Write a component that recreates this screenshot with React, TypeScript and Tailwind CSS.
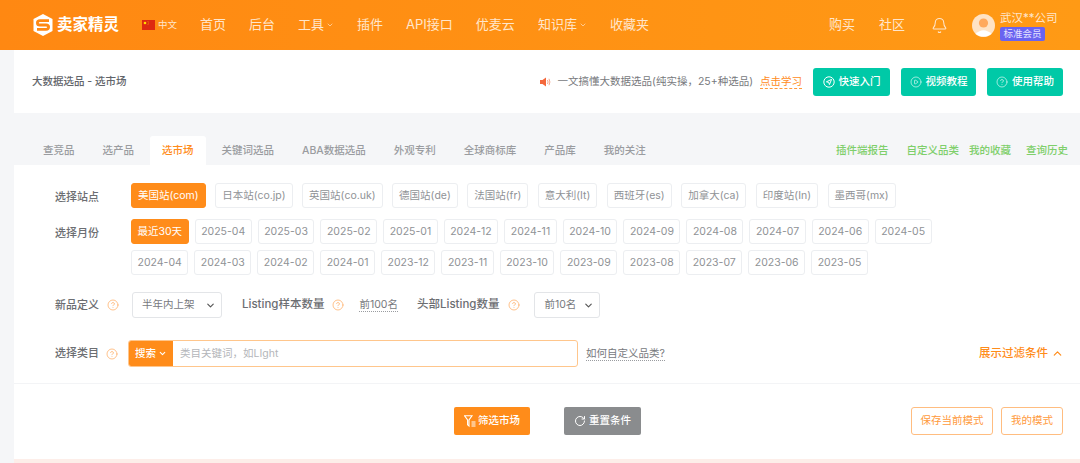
import React from "react";
import { Bell, ChevronDown, ChevronUp, CircleHelp, CirclePlay, RotateCw } from "lucide-react";

const navItems = [
    { text: "首页", arrow: false },
    { text: "后台", arrow: false },
    { text: "工具", arrow: true },
    { text: "插件", arrow: false },
    { text: "API接口", arrow: false },
    { text: "优麦云", arrow: false },
    { text: "知识库", arrow: true },
    { text: "收藏夹", arrow: false },
];

const tabs = ["查竞品", "选产品", "选市场", "关键词选品", "ABA数据选品", "外观专利", "全球商标库", "产品库", "我的关注"];

const sites = ["美国站(com)", "日本站(co.jp)", "英国站(co.uk)", "德国站(de)", "法国站(fr)", "意大利(It)", "西班牙(es)", "加拿大(ca)", "印度站(In)", "墨西哥(mx)"];

const monthsA = ["最近30天", "2025-04", "2025-03", "2025-02", "2025-01", "2024-12", "2024-11", "2024-10", "2024-09", "2024-08", "2024-07", "2024-06", "2024-05"];
const monthsB = ["2024-04", "2024-03", "2024-02", "2024-01", "2023-12", "2023-11", "2023-10", "2023-09", "2023-08", "2023-07", "2023-06", "2023-05"];

function Chip({ text, active, wide }: { text: string; active?: boolean; wide?: boolean }) {
    return (
        <div
            className={`flex h-[25px] items-center rounded-[3px] border text-[10.5px] whitespace-nowrap ${wide ? "px-[6px]" : "px-[5.5px]"} ${
                active ? "border-[#ff8c1a] bg-[#ff8c1a] text-white" : "border-[#eceef1] bg-white text-[#8f9296]"
            }`}
        >
            {text}
        </div>
    );
}

function Label({ children, wide }: { children: React.ReactNode; wide?: boolean }) {
    return <div className={`font-medium whitespace-nowrap text-[#6c6e72] ${wide ? "text-[11.5px]" : "text-[11px]"}`}>{children}</div>;
}

function Help() {
    return <CircleHelp size={12} strokeWidth={1.5} className="shrink-0 text-[#ffad66]" />;
}

function FakeSelect({ text, width }: { text: string; width: string }) {
    return (
        <div className={`flex h-[26px] items-center justify-between rounded-[3px] border border-[#e3e5e8] pr-[5px] pl-[9px] text-[10.5px] text-[#77797d] ${width}`}>
            <span>{text}</span>
            <ChevronDown size={11} strokeWidth={2.5} className="text-[#555]" />
        </div>
    );
}

function GreenButton({ icon, text, width }: { icon: React.ReactNode; text: string; width: string }) {
    return (
        <div className={`flex h-[28px] items-center justify-center gap-[4px] rounded-[3px] bg-[#00c9a7] text-[10.5px] font-medium text-white ${width}`}>
            {icon}
            {text}
        </div>
    );
}

function Logo() {
    return (
        <svg width="20" height="22" viewBox="0 0 20 22" className="shrink-0">
            <polygon points="10,0 19.5,5 19.5,17 10,22 0.5,17 0.5,5" fill="#fff" />
            <path d="M16 6.6 H7 Q4.4 6.6 4.4 8.9 Q4.4 11 7 11 H13 Q15.6 11 15.6 13.1 Q15.6 15.4 13 15.4 H4" fill="none" stroke="#ff8812" strokeWidth="2.8" />
        </svg>
    );
}

function Flag() {
    return (
        <svg width="13" height="10" viewBox="0 0 13 10" className="shrink-0">
            <rect width="13" height="10" fill="#de2910" />
            <circle cx="3" cy="3" r="1.3" fill="#ffde00" />
            <circle cx="6" cy="1.6" r="0.4" fill="#ffde00" />
            <circle cx="6.6" cy="3" r="0.4" fill="#ffde00" />
            <circle cx="6" cy="4.6" r="0.4" fill="#ffde00" />
        </svg>
    );
}

function Avatar() {
    return (
        <svg width="23" height="23" viewBox="0 0 23 23" className="shrink-0">
            <circle cx="11.5" cy="11.5" r="11.5" fill="#ffe3c4" />
            <circle cx="11.5" cy="9" r="4.6" fill="#ffa95c" />
            <path d="M3.5 20 Q11.5 12.5 19.5 20 Q11.5 25 3.5 20 Z" fill="#fff" />
        </svg>
    );
}

function Speaker() {
    return (
        <svg width="11" height="10" viewBox="0 0 11 10" className="shrink-0">
            <path d="M0 3 H2.5 L6 0.5 V9.5 L2.5 7 H0 Z" fill="#f4683c" />
            <path d="M7.5 3 Q8.7 5 7.5 7 M9 1.8 Q10.8 5 9 8.2" fill="none" stroke="#f9a58a" strokeWidth="1" />
        </svg>
    );
}

function QuickIcon() {
    return (
        <svg width="12" height="12" viewBox="0 0 12 12" fill="none" stroke="#fff" strokeWidth="1" className="shrink-0">
            <circle cx="6" cy="6" r="5.2" />
            <path d="M8.6 3.4 L3.4 5.8 L5.8 6.4 L6.4 8.6 Z" />
        </svg>
    );
}

function FilterIcon() {
    return (
        <svg width="12" height="13" viewBox="0 0 12 13" fill="none" stroke="#fff" strokeWidth="1.1" className="shrink-0">
            <path d="M0.6 0.8 H8 L5 5 V11 L3.6 9.8 V5 Z" />
            <path d="M7.5 7 H11.5 M7.5 9 H11.5 M7.5 11 H11.5" />
        </svg>
    );
}

export default function App() {
    return (
        <div className="h-[463px] w-[1080px] overflow-hidden bg-[#f5f6f8] font-['Inter','Noto_Sans_CJK_SC',sans-serif]">
            {/* top bar */}
            <header className="flex h-[50px] items-center bg-gradient-to-r from-[#ff8812] to-[#ff9a15] pl-[33px] text-[#ffe6cc]">
                <Logo />
                <div className="ml-[4px] text-[15.5px] font-bold whitespace-nowrap text-white">卖家精灵</div>
                <div className="ml-[23px] flex items-center gap-[3px] text-[9.5px]">
                    <Flag />
                    中文
                </div>
                <nav className="ml-[23px] flex items-center gap-[23px] text-[13px]">
                    {navItems.map((item) => (
                        <div key={item.text} className="flex items-center gap-[2px] whitespace-nowrap">
                            {item.text}
                            {item.arrow && <ChevronDown size={8} strokeWidth={2} />}
                        </div>
                    ))}
                </nav>
                <div className="ml-auto flex items-center text-[13px]">
                    <div>购买</div>
                    <div className="ml-[24px]">社区</div>
                    <Bell size={17} strokeWidth={1.5} className="ml-[26px]" />
                    <div className="ml-[24px]">
                        <Avatar />
                    </div>
                    <div className="mr-[23px] ml-[5px] flex w-[57px] flex-col items-start gap-[2px] pt-[2px]">
                        <div className="text-[11.5px] leading-[14px] whitespace-nowrap">武汉**公司</div>
                        <div className="rounded-[2px] bg-[#6a63f0] px-[3.5px] text-[9.5px] leading-[14px] whitespace-nowrap text-[#e6e4ff]">标准会员</div>
                    </div>
                </div>
            </header>

            {/* page title */}
            <section className="ml-[14px] flex h-[63px] items-center bg-white pl-[18px]">
                <div className="text-[10.5px] font-medium text-[#62656a]">大数据选品 - 选市场</div>
                <div className="ml-auto flex items-center pr-[17px]">
                    <Speaker />
                    <div className="ml-[7px] text-[10.5px] whitespace-nowrap text-[#77797d]">一文搞懂大数据选品(纯实操，25+种选品)</div>
                    <div className="ml-[7px] border-b border-dashed border-[#ff9a3c] text-[10.5px] leading-[13px] text-[#ff8c1a]">点击学习</div>
                    <div className="ml-[11px] flex gap-[11px]">
                        <GreenButton width="w-[77px]" icon={<QuickIcon />} text="快速入门" />
                        <GreenButton width="w-[75px]" icon={<CirclePlay size={12} strokeWidth={1.2} />} text="视频教程" />
                        <GreenButton width="w-[76px]" icon={<CircleHelp size={12} strokeWidth={1.2} />} text="使用帮助" />
                    </div>
                </div>
            </section>

            {/* tabs */}
            <div className="flex h-[52px] items-end pl-[31px] text-[10.5px] font-medium text-[#9a9ca0]">
                <div className="flex items-end gap-[4px]">
                    {tabs.map((tab) => (
                        <div
                            key={tab}
                            className={`flex h-[29px] items-center rounded-t-[3px] px-[12px] whitespace-nowrap ${
                                tab === "选市场" ? "bg-white text-[#ff8c1a]" : ""
                            }`}
                        >
                            {tab}
                        </div>
                    ))}
                </div>
                <div className="ml-auto flex h-[29px] items-center pr-[12px] whitespace-nowrap text-[#7fcf6b]">
                    <span>插件端报告</span>
                    <span className="ml-[18px]">自定义品类</span>
                    <span className="ml-[10px]">我的收藏</span>
                    <span className="ml-[15px]">查询历史</span>
                </div>
            </div>

            {/* filters */}
            <main className="ml-[14px] h-[294px] bg-white pt-[18px]">
                <div className="flex pl-[41px]">
                    <div className="w-[76px] pt-[6px]">
                        <Label>选择站点</Label>
                    </div>
                    <div className="flex gap-[9.5px]">
                        {sites.map((site, i) => (
                            <Chip key={site} text={site} active={i === 0} wide />
                        ))}
                    </div>
                </div>

                <div className="mt-[11px] flex pl-[41px]">
                    <div className="w-[76px] pt-[6px]">
                        <Label>选择月份</Label>
                    </div>
                    <div className="flex flex-col gap-[6px]">
                        <div className="flex gap-[6px]">
                            {monthsA.map((m, i) => (
                                <Chip key={m} text={m} active={i === 0} />
                            ))}
                        </div>
                        <div className="flex gap-[6px]">
                            {monthsB.map((m) => (
                                <Chip key={m} text={m} />
                            ))}
                        </div>
                    </div>
                </div>

                <div className="mt-[17px] flex h-[26px] items-center pl-[41px]">
                    <Label>新品定义</Label>
                    <div className="ml-[8px]">
                        <Help />
                    </div>
                    <div className="ml-[13px]">
                        <FakeSelect text="半年内上架" width="w-[90px]" />
                    </div>
                    <div className="ml-[20px]">
                        <Label wide>Listing样本数量</Label>
                    </div>
                    <div className="ml-[8px]">
                        <Help />
                    </div>
                    <div className="ml-[15px] border-b border-dotted border-[#9a9ca0] text-[10.5px] leading-[13px] text-[#77797d]">前100名</div>
                    <div className="ml-[19px]">
                        <Label wide>头部Listing数量</Label>
                    </div>
                    <div className="ml-[9px]">
                        <Help />
                    </div>
                    <div className="ml-[14px]">
                        <FakeSelect text="前10名" width="w-[66px]" />
                    </div>
                </div>

                <div className="mt-[22px] flex h-[27px] items-center pl-[41px]">
                    <Label>选择类目</Label>
                    <div className="ml-[7px]">
                        <Help />
                    </div>
                    <div className="ml-[10px] flex h-[27px] w-[450px] items-center overflow-hidden rounded-[3px] border border-[#ffc68c]">
                        <div className="flex h-full w-[44px] items-center justify-center gap-[2px] bg-[#ff8c1a] text-[10.5px] font-medium text-white">
                            搜索
                            <ChevronDown size={9} strokeWidth={3} />
                        </div>
                        <input
                            className="h-full flex-1 pl-[7px] text-[10.5px] outline-none placeholder:text-[#b4b6ba]"
                            placeholder="类目关键词，如LIght"
                        />
                    </div>
                    <div className="ml-[8px] border-b border-dotted border-[#9a9ca0] text-[10.5px] leading-[13px] whitespace-nowrap text-[#77797d]">如何自定义品类?</div>
                    <div className="ml-auto flex items-center gap-[3px] pr-[16px] text-[11.5px] font-medium text-[#ff8c1a]">
                        展示过滤条件
                        <ChevronUp size={13} strokeWidth={2.2} />
                    </div>
                </div>

                <div className="mt-[16px] h-px bg-[#f3f4f6]" />

                <div className="flex items-center pt-[23px] pr-[17px] pl-[440px]">
                    <div className="flex h-[28px] w-[76px] items-center justify-center gap-[2px] rounded-[2px] bg-[#ff8c1a] text-[10.5px] font-medium text-white">
                        <FilterIcon />
                        筛选市场
                    </div>
                    <div className="ml-[34px] flex h-[28px] w-[77px] items-center justify-center gap-[3px] rounded-[2px] bg-[#8a8c8e] text-[10.5px] font-medium text-white">
                        <RotateCw size={12} strokeWidth={2} />
                        重置条件
                    </div>
                    <div className="ml-auto flex h-[28px] w-[82px] items-center justify-center rounded-[3px] border border-[#ffbd80] text-[10.5px] text-[#ff9a3c]">保存当前模式</div>
                    <div className="ml-[8px] flex h-[28px] w-[62px] items-center justify-center rounded-[3px] border border-[#ffbd80] text-[10.5px] text-[#ff9a3c]">我的模式</div>
                </div>
            </main>
            <div className="ml-[14px] h-[4px] bg-[#fdeee9]" />
        </div>
    );
}
